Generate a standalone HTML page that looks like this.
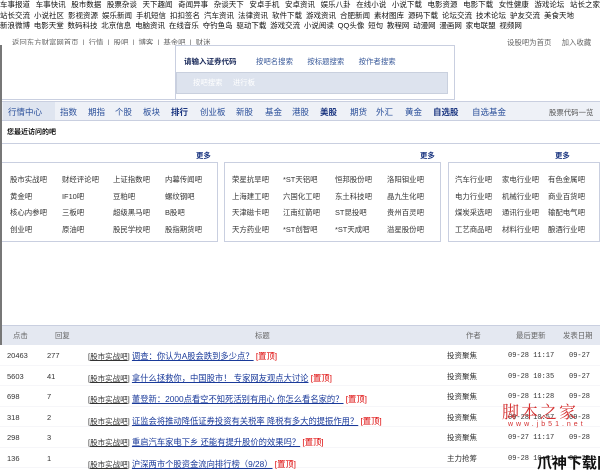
<!DOCTYPE html>
<html><head><meta charset="utf-8"><style>
*{margin:0;padding:0;box-sizing:border-box}
body{width:600px;height:470px;overflow:hidden;background:#fff;position:relative;font-family:"Liberation Sans","Noto Sans CJK SC",sans-serif;color:#333}
.a{position:absolute;white-space:nowrap}
.top{position:absolute;left:0;display:flex;justify-content:space-between;font-size:7.5px;color:#111;line-height:10px}
.lb{position:absolute;left:0;top:45px;width:2px;height:425px;background:#777}
.box{position:absolute;border:1px solid #c9cfe0;background:#fff}
.s{font-size:7.4px;color:#333}
.nav{font-size:8.5px;color:#2a4f9a}
.b{font-weight:bold;color:#1a3580}
.tt{font-size:7.5px;color:#333}
.ln{color:#1a3a9a;text-decoration:underline;font-size:8.3px}
.red{color:#d00;font-size:8.3px}
</style></head><body>
<div class="top" style="top:0;width:600px">
<span>车事报道</span><span>车事快讯</span><span>股市数据</span><span>股票杂谈</span><span>天下趣闻</span><span>奇闻异事</span><span>杂谈天下</span><span>安卓手机</span><span>安卓资讯</span><span>娱乐八卦</span><span>在线小说</span><span>小说下载</span><span>电影资源</span><span>电影下载</span><span>女性健康</span><span>游戏论坛</span><span>站长之家</span></div>
<div class="top" style="top:10.5px;width:574px"><span>站长交流</span><span>小说社区</span><span>影视资源</span><span>娱乐新闻</span><span>手机短信</span><span>扣扣签名</span><span>汽车资讯</span><span>法律资讯</span><span>软件下载</span><span>游戏资讯</span><span>合肥新闻</span><span>素材图库</span><span>源码下载</span><span>论坛交流</span><span>技术论坛</span><span>驴友交流</span><span>美食天地</span></div>
<div class="top" style="top:21px;width:522px"><span>新浪微博</span><span>电影天堂</span><span>数码科技</span><span>北京信息</span><span>电脑资讯</span><span>在线音乐</span><span>夺钓鱼岛</span><span>驱动下载</span><span>游戏交流</span><span>小说阅读</span><span>QQ头像</span><span>短句</span><span>教程网</span><span>动漫网</span><span>漫画网</span><span>家电联盟</span><span>视频网</span></div>
<div class="lb"></div>
<div class="a s" style="left:12px;top:37px;color:#666">返回东方财富网首页 &nbsp;| &nbsp;行情 &nbsp;| &nbsp;股吧 &nbsp;| &nbsp;博客 &nbsp;| &nbsp;基金吧 &nbsp;| &nbsp;财迷</div>
<div class="a s" style="left:507px;top:37px;color:#666">设股吧为首页 &nbsp; &nbsp; 加入收藏</div>
<div class="box" style="left:2px;top:45px;width:453px;height:55px;border-left:none;border-top:none"></div>
<div class="box" style="left:175px;top:45px;width:280px;height:55px"></div>
<div class="a" style="left:184px;top:56px;font-size:7.5px;color:#1a2a5a;font-weight:bold">请输入证券代码</div>
<div class="a s" style="left:256px;top:56px;color:#3a5a9a">按吧名搜索 &nbsp; &nbsp; &nbsp; 按标题搜索 &nbsp; &nbsp; &nbsp; 按作者搜索</div>
<div class="a" style="left:176px;top:72px;width:272px;height:22px;background:#dde3ee;border:1px solid #c9d0de"></div>
<div class="a s" style="left:193px;top:77px;color:#fff">按吧搜索 &nbsp; &nbsp; 进行板</div>
<div class="a" style="left:2px;top:101px;width:598px;height:20px;background:#eef1f7;border-top:1px solid #c9cfe0;border-bottom:1px solid #c9cfe0"></div>
<div class="a" style="left:3px;top:102px;width:52px;height:18px;background:#dfe5f0"></div>
<div class="a nav" style="left:8px;top:106px">行情中心</div>
<div class="a nav" style="left:60px;top:106px">指数</div>
<div class="a nav" style="left:88px;top:106px">期指</div>
<div class="a nav" style="left:115px;top:106px">个股</div>
<div class="a nav" style="left:143px;top:106px">板块</div>
<div class="a nav b" style="left:171px;top:106px">排行</div>
<div class="a nav" style="left:200px;top:106px">创业板</div>
<div class="a nav" style="left:236px;top:106px">新股</div>
<div class="a nav" style="left:265px;top:106px">基金</div>
<div class="a nav" style="left:292px;top:106px">港股</div>
<div class="a nav b" style="left:320px;top:106px">美股</div>
<div class="a nav" style="left:350px;top:106px">期货</div>
<div class="a nav" style="left:376px;top:106px">外汇</div>
<div class="a nav" style="left:405px;top:106px">黄金</div>
<div class="a nav b" style="left:433px;top:106px">自选股</div>
<div class="a nav" style="left:472px;top:106px">自选基金</div>
<div class="a s" style="left:549px;top:107px;color:#555">股票代码一览</div>
<div class="a" style="left:7px;top:127px;font-size:7px;color:#111;font-weight:bold">您最近访问的吧</div>
<div class="a" style="left:2px;top:143px;width:598px;height:1px;background:#c9cfe0"></div>
<div class="a s b" style="left:196px;top:150px">更多</div>
<div class="a s b" style="left:420px;top:150px">更多</div>
<div class="a s b" style="left:555px;top:150px">更多</div>
<div class="box" style="left:2px;top:162px;width:216px;height:80px;border-left:none"></div>
<div class="box" style="left:224px;top:162px;width:217px;height:80px"></div>
<div class="box" style="left:448px;top:162px;width:152px;height:80px"></div>
<div class="a s" style="left:10px;top:172px;line-height:16.7px">股市实战吧<br>黄金吧<br>核心内参吧<br>创业吧</div>
<div class="a s" style="left:62px;top:172px;line-height:16.7px">财经评论吧<br>IF10吧<br>三板吧<br>原油吧</div>
<div class="a s" style="left:113px;top:172px;line-height:16.7px">上证指数吧<br>豆粕吧<br>超级黑马吧<br>股民学校吧</div>
<div class="a s" style="left:165px;top:172px;line-height:16.7px">内幕传闻吧<br>螺纹钢吧<br>B股吧<br>股指期货吧</div>
<div class="a s" style="left:232px;top:172px;line-height:16.7px">荣星抗旱吧<br>上海建工吧<br>天津磁卡吧<br>天方药业吧</div>
<div class="a s" style="left:283px;top:172px;line-height:16.7px">*ST天铝吧<br>六国化工吧<br>江南红箭吧<br>*ST创智吧</div>
<div class="a s" style="left:335px;top:172px;line-height:16.7px">恒邦股份吧<br>东土科技吧<br>ST昆投吧<br>*ST天成吧</div>
<div class="a s" style="left:387px;top:172px;line-height:16.7px">洛阳钼业吧<br>晶九生化吧<br>贵州百灵吧<br>溢星股份吧</div>
<div class="a s" style="left:455px;top:172px;line-height:16.7px">汽车行业吧<br>电力行业吧<br>煤炭采选吧<br>工艺商品吧</div>
<div class="a s" style="left:502px;top:172px;line-height:16.7px">家电行业吧<br>机械行业吧<br>通讯行业吧<br>材料行业吧</div>
<div class="a s" style="left:548px;top:172px;line-height:16.7px">有色金属吧<br>商业百货吧<br>输配电气吧<br>酿酒行业吧</div>
<div class="a" style="left:2px;top:325px;width:598px;height:20px;background:#e4e8f1;border-top:1px solid #c9cfe0"></div>
<div class="a s" style="left:13px;top:330px;color:#666">点击</div>
<div class="a s" style="left:55px;top:330px;color:#666">回复</div>
<div class="a s" style="left:255px;top:330px;color:#666">标题</div>
<div class="a s" style="left:466px;top:330px;color:#666">作者</div>
<div class="a s" style="left:516px;top:330px;color:#666">最后更新</div>
<div class="a s" style="left:563px;top:330px;color:#666">发表日期</div>
<div class="a" style="left:0;top:345px;width:600px">
<div style="position:absolute;top:0;width:600px;height:125px;background:repeating-linear-gradient(#fff 0,#fff 20px,#eceef3 20px,#eceef3 20.5px)"></div>
</div>
<div class="a tt" style="left:7px;top:346px;line-height:20.5px">20463<br>5603<br>698<br>318<br>298<br>136</div>
<div class="a tt" style="left:47px;top:346px;line-height:20.5px">277<br>41<br>7<br>2<br>3<br>1</div>
<div class="a" style="left:88px;top:346px;line-height:20.5px;font-size:8px">
<div><span class="tt">[<u>股市实战吧</u>]</span> <span class="ln">调查：你认为A股会跌到多少点？</span> <span class="red">[置顶]</span></div>
<div><span class="tt">[<u>股市实战吧</u>]</span> <span class="ln">拿什么拯救你，中国股市！ 专家网友观点大讨论</span> <span class="red">[置顶]</span></div>
<div><span class="tt">[<u>股市实战吧</u>]</span> <span class="ln">董登新：2000点看空不知死活别有用心 你怎么看名家的？</span> <span class="red">[置顶]</span></div>
<div><span class="tt">[<u>股市实战吧</u>]</span> <span class="ln">证监会将推动降低证券投资有关税率 降税有多大的提振作用？</span> <span class="red">[置顶]</span></div>
<div><span class="tt">[<u>股市实战吧</u>]</span> <span class="ln">重启汽车家电下乡 还能有提升股价的效果吗？</span> <span class="red">[置顶]</span></div>
<div><span class="tt">[<u>股市实战吧</u>]</span> <span class="ln">沪深两市个股资金流向排行榜（9/28）</span> <span class="red">[置顶]</span></div>
</div>
<div class="a tt" style="left:447px;top:346px;line-height:20.5px">投资聚焦<br>投资聚焦<br>投资聚焦<br>投资聚焦<br>投资聚焦<br>主力抢筹</div>
<div class="a tt" style="left:508px;top:346px;line-height:20.5px;font-family:'Liberation Mono',monospace;font-size:7px">09-28 11:17<br>09-28 10:35<br>09-28 11:28<br>09-28 10:57<br>09-27 11:17<br>09-28 10:01</div>
<div class="a tt" style="left:569px;top:346px;line-height:20.5px;font-family:'Liberation Mono',monospace;font-size:7px">09-27<br>09-27<br>09-28<br>09-28<br>09-28<br>09-28</div>
<div class="a" style="left:502px;top:398px;font-size:17px;color:#d43030;font-family:'Liberation Serif','Noto Serif CJK SC',serif;letter-spacing:2px">脚本之家</div>
<div class="a" style="left:508px;top:421px;font-size:7px;color:#d43030;letter-spacing:3px">www.jb51.net</div>
<div class="a" style="left:537px;top:452px;font-size:15px;color:#111;font-weight:bold">爪神下载网</div>
</body></html>
